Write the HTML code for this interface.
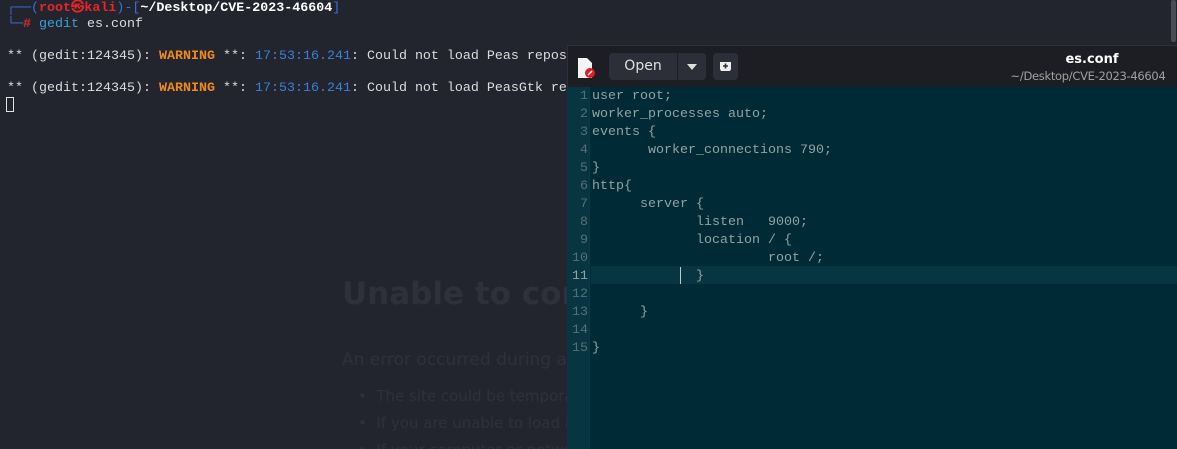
<!DOCTYPE html>
<html><head><style>
*{margin:0;padding:0;box-sizing:border-box}
html,body{width:1177px;height:449px;overflow:hidden}
body{background:#23252e;position:relative;font-family:"Liberation Mono",monospace;font-size:13.33px}
.t{position:absolute;left:7px;white-space:pre;color:#dcdcdc;line-height:16px}
.bg{position:absolute;color:#2e313b;font-family:"DejaVu Sans",sans-serif;white-space:nowrap}
#win{position:absolute;left:567px;top:45px;width:610px;height:404px;background:#002b36;overflow:hidden}
#hdr{position:absolute;left:0;top:0;width:610px;height:42px;background:#1d1e24;border-top:1px solid #2f3038;border-left:1px solid #2f3038}
#gut{position:absolute;left:0;top:42px;width:23px;height:362px;background:#073642;border-right:1px solid #0b3a46}
.ln{position:absolute;right:3px;color:#586e75;line-height:18px;text-align:right}
.c{position:absolute;color:#93a1a1;white-space:pre;line-height:18px}
.btn{position:absolute;top:7px;height:27px;background:#2d2f38;border-radius:4px;color:#e0e0e0;font-family:"DejaVu Sans",sans-serif;font-size:14px;line-height:27px;text-align:center}
</style></head><body>
<div class="t" style="top:1px"><span style="color:#3a6fd8">┌──(</span><span style="color:#e8252a;font-weight:bold">root㉿kali</span><span style="color:#3a6fd8">)-[</span><span style="font-weight:bold;color:#fff">~/Desktop/CVE-2023-46604</span><span style="color:#3a6fd8">]</span></div>
<div class="t" style="top:17px"><span style="color:#3a6fd8">└─</span><span style="color:#e8252a;font-weight:bold">#</span> <span style="color:#3aa0d8">gedit</span> es.conf</div>
<div class="t" style="top:49px">** (gedit:124345): <span style="color:#f08a1c;font-weight:bold">WARNING</span> **: <span style="color:#3a7fd8">17:53:16.241</span>: Could not load Peas repos</div>
<div class="t" style="top:81px">** (gedit:124345): <span style="color:#f08a1c;font-weight:bold">WARNING</span> **: <span style="color:#3a7fd8">17:53:16.241</span>: Could not load PeasGtk re</div>
<div style="position:absolute;left:6px;top:97px;width:8px;height:15px;border:1px solid #e2e2e2"></div>
<div style="position:absolute;left:1171px;top:0;width:5px;height:42px;background:#4a4c55;border-radius:2px"></div>
<div class="bg" style="left:342px;top:276px;font-size:31px;font-weight:bold">Unable to connect</div>
<div class="bg" style="left:342px;top:350px;font-size:17px">An error occurred during a connection</div>
<div class="bg" style="left:358px;top:387px;font-size:15px">•&nbsp; The site could be temporarily unavailable</div>
<div class="bg" style="left:358px;top:414px;font-size:15px">•&nbsp; If you are unable to load any pages</div>
<div class="bg" style="left:358px;top:441px;font-size:15px">•&nbsp; If your computer or network is protected</div>
<div id="win">
<div id="hdr">
<svg style="position:absolute;left:9px;top:11px" width="18" height="22" viewBox="0 0 18 22"><path d="M1 1h9l5 5v15H1z" fill="#f4f4f4"/><circle cx="13" cy="16" r="5" fill="#e01b24"/><path d="M11 18l4-4" stroke="#fff" stroke-width="1.5"/></svg>
<div class="btn" style="left:41px;width:68px;border-radius:4px 0 0 4px">Open</div>
<div class="btn" style="left:110px;width:28px;border-radius:0 4px 4px 0"><svg width="10" height="6" viewBox="0 0 10 6" style="margin-top:10px"><path d="M0 0h10L5 6z" fill="#ddd"/></svg></div>
<div class="btn" style="left:145px;width:25px"><svg width="13" height="11" viewBox="0 0 13 11" style="margin-top:8px"><path d="M1 1h11v7l-1 2H2L1 8z" fill="#eee"/><path d="M6.5 2.5v5M4 5h5" stroke="#2d2f38" stroke-width="1.6"/></svg></div>
<div style="position:absolute;left:448px;top:6px;width:152px;text-align:center;color:#fff;font-family:'DejaVu Sans',sans-serif;font-weight:bold;font-size:13px">es.conf</div>
<div style="position:absolute;left:430px;top:23px;width:180px;text-align:center;color:#a0a0a0;font-family:'DejaVu Sans',sans-serif;font-size:11.5px;letter-spacing:-0.3px">~/Desktop/CVE-2023-46604</div>
</div>
<div id="gut"></div>
<div style="position:absolute;left:24px;top:221px;width:586px;height:18px;background:#073642"></div>
<div style="position:absolute;left:113px;top:222px;width:1px;height:17px;background:#c0c8c8"></div>
<div class="ln" style="left:0;width:21px;top:43px">1<br>2<br>3<br>4<br>5<br>6<br>7<br>8<br>9<br>10<br><span style="color:#93a1a1">11</span><br>12<br>13<br>14<br>15</div>
<div class="c" style="left:25px;top:43px">user root;</div>
<div class="c" style="left:25px;top:61px">worker_processes auto;</div>
<div class="c" style="left:25px;top:79px">events {</div>
<div class="c" style="left:81px;top:97px">worker_connections 790;</div>
<div class="c" style="left:25px;top:115px">}</div>
<div class="c" style="left:25px;top:133px">http{</div>
<div class="c" style="left:73px;top:151px">server {</div>
<div class="c" style="left:129px;top:169px">listen   9000;</div>
<div class="c" style="left:129px;top:187px">location / {</div>
<div class="c" style="left:201px;top:205px">root /;</div>
<div class="c" style="left:129px;top:223px">}</div>
<div class="c" style="left:73px;top:259px">}</div>
<div class="c" style="left:25px;top:295px">}</div>
</div>
</body></html>
